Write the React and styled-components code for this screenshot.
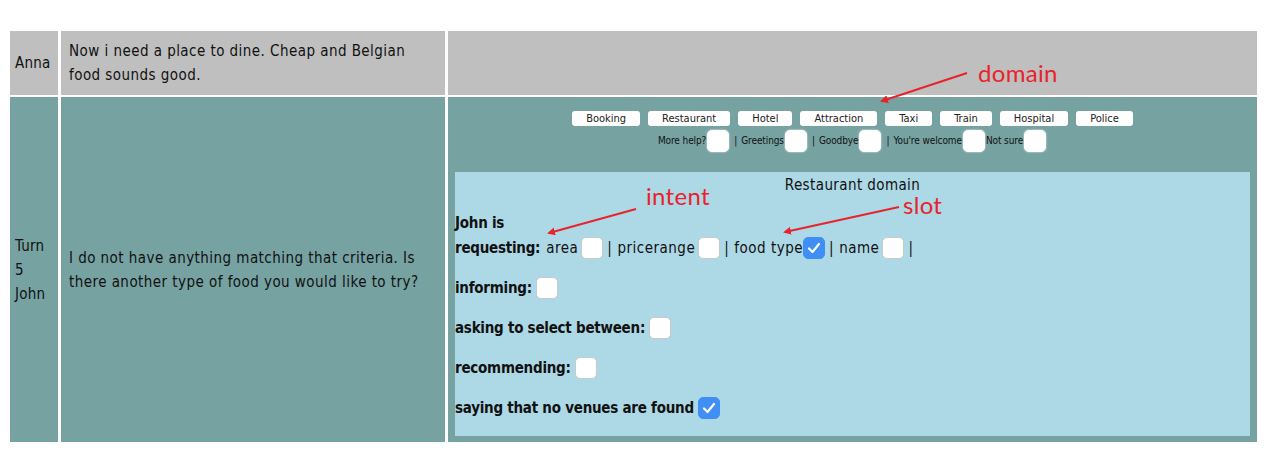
import React from "react";
import styled, { createGlobalStyle } from "styled-components";

const GlobalStyle = createGlobalStyle`
  body {
    margin: 0;
    background: #ffffff;
    font-family: "DejaVu Sans Condensed", "DejaVu Sans", sans-serif;
    color: #111;
  }
`;

const domains = ["Booking", "Restaurant", "Hotel", "Attraction", "Taxi", "Train", "Hospital", "Police"];
const extras = ["More help?", "Greetings", "Goodbye", "You're welcome", "Not sure"];

const slots = [
  { name: "area", checked: false },
  { name: "pricerange", checked: false },
  { name: "food type", checked: true, tight: true },
  { name: "name", checked: false },
];

const intents = [
  { label: "informing:", checked: false },
  { label: "asking to select between:", checked: false },
  { label: "recommending:", checked: false },
  { label: "saying that no venues are found", checked: true },
];

const Check = ({ checked, small }) => (
  <Box $checked={checked} $small={small}>
    {checked && (
      <svg width="14" height="12" viewBox="0 0 14 12">
        <path d="M2 6.5 L5.5 10 L12 2" fill="none" stroke="#fff" strokeWidth="2.2" strokeLinecap="round" strokeLinejoin="round" />
      </svg>
    )}
  </Box>
);

const App = () => {
  return (
    <Page>
      <GlobalStyle />
      <Grid>
        <NameCell $tone="gray">Anna</NameCell>
        <TextCell $tone="gray">Now i need a place to dine. Cheap and Belgian food sounds good.</TextCell>
        <AnnotCell $tone="gray" />

        <NameCell $tone="teal">
          Turn
          <br />5
          <br />John
        </NameCell>
        <TextCell $tone="teal">
          I do not have anything matching that criteria. Is there another type of food you would like to try?
        </TextCell>
        <AnnotCell $tone="teal">
          <DomainBar>
            {domains.map((d) => (
              <DomainButton key={d}>{d}</DomainButton>
            ))}
          </DomainBar>
          <ExtraBar>
            {extras.map((e, i) => (
              <ExtraItem key={e}>
                {e}
                <Check small />
                {i < extras.length - 2 && <Sep>|</Sep>}
              </ExtraItem>
            ))}
          </ExtraBar>
          <Panel>
            <PanelTitle>Restaurant domain</PanelTitle>
            <Who>John is</Who>
            <IntentRow>
              <b>requesting:</b>
              {slots.map((s) => (
                <SlotItem key={s.name}>
                  <SlotName $tight={s.tight}>{s.name}</SlotName>
                  <Check checked={s.checked} />
                  <Sep $big>|</Sep>
                </SlotItem>
              ))}
            </IntentRow>
            {intents.map((it) => (
              <IntentRow key={it.label} $spaced>
                <b>{it.label}</b>
                <Check checked={it.checked} />
              </IntentRow>
            ))}
          </Panel>
        </AnnotCell>
      </Grid>

      <Note style={{ left: 978, top: 58 }}>domain</Note>
      <Note style={{ left: 646, top: 181 }}>intent</Note>
      <Note style={{ left: 903, top: 190 }}>slot</Note>
      <Arrows width="1267" height="453" viewBox="0 0 1267 453">
        <defs>
          <marker id="head" markerWidth="8" markerHeight="8" refX="6" refY="4" orient="auto" markerUnits="userSpaceOnUse">
            <path d="M0 0 L8 4 L0 8 Z" fill="#e8232b" />
          </marker>
        </defs>
        <line x1="967" y1="73" x2="882" y2="101" stroke="#e8232b" strokeWidth="2" markerEnd="url(#head)" />
        <line x1="636" y1="209" x2="549" y2="233" stroke="#e8232b" strokeWidth="2" markerEnd="url(#head)" />
        <line x1="899" y1="207" x2="785" y2="232" stroke="#e8232b" strokeWidth="2" markerEnd="url(#head)" />
      </Arrows>
    </Page>
  );
};

const Page = styled.div`
  position: relative;
  width: 1267px;
  height: 453px;
  padding: 31px 10px 0;
  box-sizing: border-box;
`;

const Grid = styled.div`
  display: grid;
  grid-template-columns: 48px 384px 1fr;
  grid-template-rows: 64px 345px;
  column-gap: 3px;
  row-gap: 2px;
`;

const Cell = styled.div`
  background: ${(p) => (p.$tone === "gray" ? "#bfbfbf" : "#76a2a2")};
  font-size: 15px;
  line-height: 24px;
  letter-spacing: 0.45px;
`;

const NameCell = styled(Cell)`
  display: flex;
  align-items: center;
  padding-left: 5px;
  letter-spacing: 0.2px;
`;

const TextCell = styled(Cell)`
  display: flex;
  align-items: center;
  padding: 0 8px;
`;

const AnnotCell = styled(Cell)`
  display: flex;
  flex-direction: column;
  padding: 14px 7px 7px;
  box-sizing: border-box;
  letter-spacing: 0;
`;

const DomainBar = styled.div`
  display: flex;
  justify-content: center;
  gap: 8px;
`;

const DomainButton = styled.button`
  font-family: inherit;
  font-size: 11px;
  line-height: 15px;
  height: 15px;
  padding: 0 14px;
  border: none;
  border-radius: 3px;
  background: #fff;
  color: #222;
`;

const ExtraBar = styled.div`
  display: flex;
  justify-content: center;
  align-items: center;
  margin-top: 3px;
  font-size: 10px;
  letter-spacing: -0.1px;
`;

const ExtraItem = styled.span`
  display: inline-flex;
  align-items: center;
`;

const Sep = styled.span`
  margin: ${(p) => (p.$big ? "0 0 0 1px" : "0 4px")};
`;

const Box = styled.span`
  display: inline-flex;
  align-items: center;
  justify-content: center;
  width: 22px;
  height: 22px;
  box-sizing: border-box;
  margin: 0 ${(p) => (p.$small ? "1px" : "3px")};
  border-radius: 5px;
  background: ${(p) => (p.$checked ? "#3f8ff5" : "#fff")};
  border: 1px solid ${(p) => (p.$checked ? "#3f8ff5" : p.$small ? "#fff" : "#c9c9c9")};
  box-shadow: ${(p) => (p.$small ? "0 0 2px rgba(255,255,255,0.9)" : "none")};
`;

const Panel = styled.div`
  flex: 1;
  margin-top: 19px;
  background: #add8e6;
  padding-bottom: 15px;
  font-size: 15px;
  letter-spacing: 0.5px;
  b {
    letter-spacing: -0.25px;
  }
`;

const PanelTitle = styled.div`
  text-align: center;
  font-size: 15px;
  letter-spacing: 0.4px;
  line-height: 24px;
  padding-top: 1px;
`;

const Who = styled.div`
  margin-top: 14px;
  font-weight: bold;
  line-height: 24px;
  letter-spacing: -0.25px;
`;

const IntentRow = styled.div`
  display: flex;
  align-items: center;
  height: 26px;
  margin-top: ${(p) => (p.$spaced ? "14px" : "0")};
  white-space: pre;
  b {
    margin-right: 1px;
  }
`;

const SlotItem = styled.span`
  display: inline-flex;
  align-items: center;
`;

const SlotName = styled.span`
  margin-left: 5px;
  margin-right: ${(p) => (p.$tight ? "-3px" : "0")};
`;

const Note = styled.span`
  position: absolute;
  font-family: Lato, "Open Sans", sans-serif;
  font-size: 24px;
  line-height: 30px;
  letter-spacing: 0.3px;
  color: #e8232b;
`;

const Arrows = styled.svg`
  position: absolute;
  left: 0;
  top: 0;
  pointer-events: none;
`;

export default App;
